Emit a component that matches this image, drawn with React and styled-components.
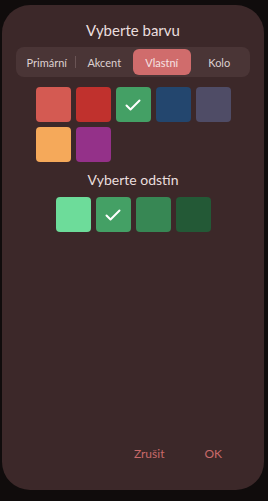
import { createGlobalStyle, styled } from "styled-components";

const Global = createGlobalStyle`
    html, body {
        margin: 0;
        padding: 0;
        background: #100c0c;
        font-family: Lato, 'Noto Sans', sans-serif;
    }
`;

const Page = styled.div`
    width: 268px;
    height: 501px;
    padding: 5px 4px 11px 2px;
    box-sizing: border-box;
`;

const Dialog = styled.div`
    display: flex;
    flex-direction: column;
    align-items: center;
    height: 100%;
    background: #3c2829;
    border-radius: 28px;
    padding-top: 15px;
    box-sizing: border-box;
`;

const Title = styled.h2`
    margin: 0;
    font-size: 15px;
    line-height: 20px;
    font-weight: 400;
    color: #eadede;
`;

const SubTitle = styled.h3`
    margin: 9px 0 0;
    font-size: 14px;
    line-height: 18px;
    font-weight: 400;
    color: #eadede;
`;

const Tabs = styled.div`
    display: grid;
    grid-template-columns: repeat(4, 1fr);
    align-self: stretch;
    margin: 7px 14px 0;
    height: 30px;
    padding: 2px;
    box-sizing: border-box;
    background: #4a3536;
    border-radius: 8px;
`;

const Tab = styled.div`
    position: relative;
    display: flex;
    align-items: center;
    justify-content: center;
    font-size: 11px;
    border-radius: 6px;
    color: ${(p) => (p.$active ? "#f6e2e2" : "#ddd0d0")};
    background: ${(p) => (p.$active ? "#d06c6c" : "transparent")};

    &::after {
        content: "";
        display: ${(p) => (p.$divider ? "block" : "none")};
        position: absolute;
        right: 0;
        top: 7px;
        bottom: 7px;
        width: 1px;
        background: #6a5455;
    }
`;

const Grid = styled.div`
    display: grid;
    grid-template-columns: repeat(${(p) => p.$cols}, 35px);
    grid-auto-rows: 35px;
    gap: 5px;
    margin-top: ${(p) => p.$top}px;
`;

const Swatch = styled.div`
    display: flex;
    align-items: center;
    justify-content: center;
    border-radius: 4px;
    background: ${(p) => p.$color};
`;

const Footer = styled.div`
    display: flex;
    justify-content: flex-end;
    gap: 16px;
    align-self: stretch;
    margin-top: auto;
    padding: 0 30px 18px 0;
`;

const TextButton = styled.button`
    border: 0;
    background: none;
    padding: 10px 12px;
    font-family: inherit;
    font-size: 12px;
    line-height: 16px;
    color: #c96a6a;
`;

const Check = () => (
    <svg width="16" height="12" viewBox="0 0 16 12" fill="none">
        <path d="M1.5 6.5 L5.5 10.5 L14.5 1.5" stroke="#fff" strokeWidth="2" strokeLinecap="round" strokeLinejoin="round" />
    </svg>
);

const colors = ["#d45a52", "#c0312d", "#44a065", "#23466e", "#4f4c66", "#f5a95a", "#943189"];
const shades = ["#6ddc9a", "#44a065", "#378754", "#235936"];
const tabs = ["Primární", "Akcent", "Vlastní", "Kolo"];

const App = () => {
    return (
        <Page>
            <Global />
            <Dialog>
                <Title>Vyberte barvu</Title>
                <Tabs>
                    {tabs.map((t, i) => (
                        <Tab key={t} $active={i === 2} $divider={i === 0}>{t}</Tab>
                    ))}
                </Tabs>
                <Grid $cols={5} $top={10}>
                    {colors.map((c, i) => (
                        <Swatch key={c} $color={c}>{i === 2 && <Check />}</Swatch>
                    ))}
                </Grid>
                <SubTitle>Vyberte odstín</SubTitle>
                <Grid $cols={4} $top={8}>
                    {shades.map((c, i) => (
                        <Swatch key={c} $color={c}>{i === 1 && <Check />}</Swatch>
                    ))}
                </Grid>
                <Footer>
                    <TextButton>Zrušit</TextButton>
                    <TextButton>OK</TextButton>
                </Footer>
            </Dialog>
        </Page>
    );
};

export default App;
